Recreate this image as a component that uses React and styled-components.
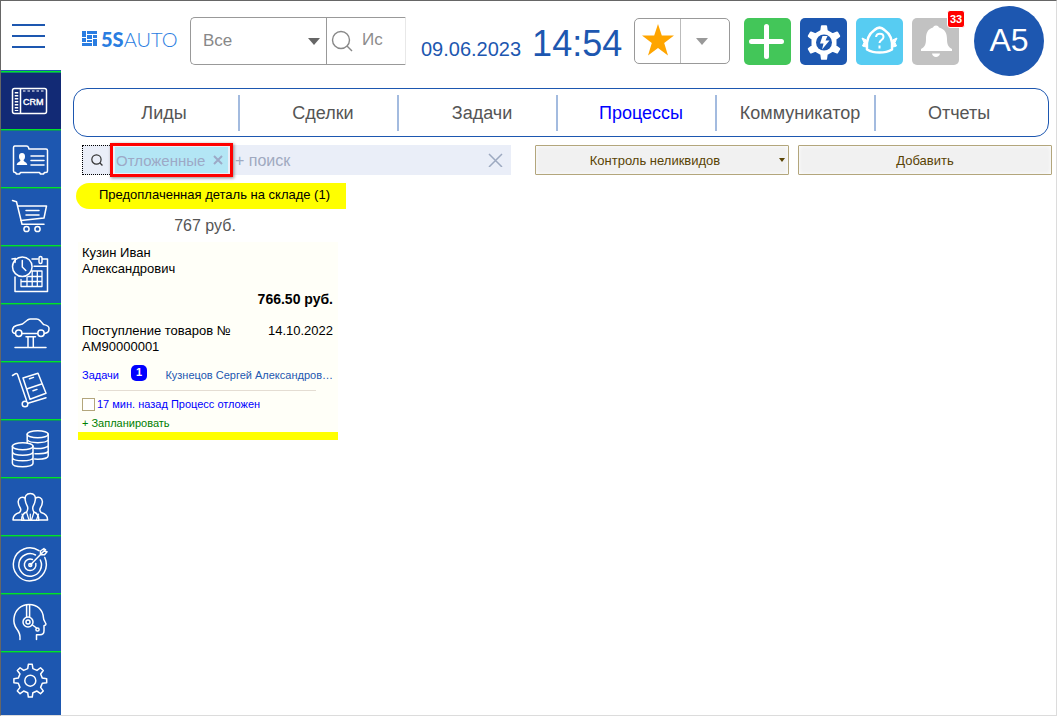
import React from "react";
import styled, { createGlobalStyle } from "styled-components";

const BLUE = "#1d57b0";

const GlobalStyle = createGlobalStyle`
  *, *::before, *::after { box-sizing: border-box; }
  body {
    margin: 0;
    background: #fff;
    color: #000;
    font-family: "Liberation Sans", Arial, sans-serif;
    font-size: 13px;
  }
  button, input, select { font-family: inherit; }
  button { cursor: pointer; }
`;

const Page = styled.div`
  display: grid;
  grid-template-columns: 60px minmax(0, 1fr);
  min-height: 100vh;
  border: 1px solid #dcdcdc;
  border-top-color: #666;
  border-left-color: #666;
`;

const Side = styled.aside`
  display: flex;
  flex-direction: column;
`;

const MenuButton = styled.button`
  height: 69px;
  padding: 0 0 0 11px;
  border: 0;
  background: none;
  text-align: left;
  svg { display: block; }
`;

const SideNav = styled.nav`
  flex: 1;
  padding-top: 1px;
  background: ${BLUE};
`;

const SideLink = styled.a`
  display: block;
  height: 58px;
  border-top: 1px solid #00e428;
  background: ${(p) => (p.$active ? "#122a75" : BLUE)};
  box-shadow: inset 0 1px #0d8f68;
  svg { display: block; }
`;

const Main = styled.main`
  display: flex;
  flex-direction: column;
`;

const Header = styled.header`
  display: flex;
  align-items: center;
  height: 80px;
  padding: 0 12px 0 21px;
`;

const Logo = styled.a`
  display: flex;
  align-items: center;
  gap: 4px;
  width: 108px;
  padding-bottom: 5px;
  color: #2a7de1;
  font-family: Lato, sans-serif;
  font-size: 20px;
  font-weight: 300;
  line-height: 24px;
  text-decoration: none;
  b { font-weight: 900; }
  svg { flex: none; }
`;

const SearchBar = styled.form`
  display: flex;
  width: 216px;
  height: 48px;
  border: 1px solid #999;
  border-right: 1px solid #e8e8e8;
  border-radius: 5px 0 0 5px;
`;

const SelectBox = styled.label`
  position: relative;
  display: block;
  width: 136px;
  border-right: 1px solid #999;
  svg { position: absolute; right: 6px; top: 20px; pointer-events: none; }
`;

const ScopeSelect = styled.select`
  appearance: none;
  width: 100%;
  height: 100%;
  padding: 0 24px 1px 12px;
  border: 0;
  background: none;
  color: #888;
  font-size: 17px;
`;

const QueryBox = styled.label`
  display: flex;
  align-items: center;
  gap: 9px;
  flex: 1;
  min-width: 0;
  padding-left: 4px;
  svg { flex: none; }
`;

const QueryInput = styled.input`
  width: 24px;
  padding: 0 0 2px;
  border: 0;
  background: none;
  font-size: 17px;
  outline: none;
  &::placeholder { color: #8c8c8c; opacity: 1; }
`;

const Clock = styled.time`
  display: flex;
  align-items: baseline;
  gap: 11px;
  margin-left: 15px;
  padding-top: 11px;
  color: ${BLUE};
  font-size: 20px;
  line-height: 40px;
  white-space: nowrap;
  strong { font-size: 36px; font-weight: 400; }
`;

const Actions = styled.div`
  display: flex;
  align-items: center;
  gap: 9px;
  margin-left: auto;
`;

const Favorites = styled.div`
  display: flex;
  width: 96px;
  height: 46px;
  margin-right: 5px;
  border: 1px solid #999;
  border-radius: 5px;
`;

const FavoriteButton = styled.button`
  display: grid;
  place-items: center;
  flex: 1;
  padding: 0 0 2px;
  border: 0;
  background: none;
  & + & { flex: none; width: 49px; padding: 0 6px 0 0; border-left: 1px solid #bbb; }
`;

const IconButton = styled.button`
  position: relative;
  width: 47px;
  height: 47px;
  padding: 0;
  border: 0;
  border-radius: 5px;
  background: ${(p) => p.$color};
  svg { display: block; }
`;

const Badge = styled.span`
  position: absolute;
  top: -8px;
  right: -6px;
  width: 18px;
  height: 18px;
  border: 1px solid #fff;
  border-radius: 3px;
  background: #f00;
  color: #fff;
  font-size: 11px;
  font-weight: 700;
  line-height: 16px;
  text-align: center;
`;

const Avatar = styled.button`
  width: 70px;
  height: 70px;
  margin-left: 6px;
  padding: 0 0 2px;
  border: 0;
  border-radius: 50%;
  background: ${BLUE};
  color: #fff;
  font-size: 32px;
`;

const Tabs = styled.nav`
  display: flex;
  align-items: center;
  height: 49px;
  margin: 7px 7px 0 12px;
  padding: 0 13px 0 7px;
  border: 1px solid ${BLUE};
  border-radius: 14px;
`;

const Tab = styled.a`
  flex: 1 1 0;
  height: 36px;
  padding-left: 9px;
  border-right: 2px solid #a3bbdf;
  color: ${(p) => (p.$active ? "#00f" : "#555")};
  font-size: 18px;
  line-height: 36px;
  text-align: center;
  text-decoration: none;
  &:last-child { border-right-color: transparent; }
`;

const Toolbar = styled.div`
  display: flex;
  gap: 24px;
  margin: 8px 4px 0 21px;
`;

const Filter = styled.form`
  display: flex;
  align-items: center;
  flex: 429 1 0;
  min-width: 0;
  height: 30px;
  background: #eaeef8;
`;

const FilterButton = styled.button`
  display: grid;
  place-items: center;
  width: 28px;
  height: 30px;
  padding: 0;
  border: 1px dotted #000;
  border-right: 0;
  background: none;
`;

const ChipFrame = styled.div`
  flex: none;
  height: 34px;
  padding: 1px 2px;
  border: 3px solid #f00;
  background: #eaeef8;
  box-shadow: 1px 1px 3px #888;
`;

const Chip = styled.span`
  display: flex;
  align-items: center;
  gap: 8px;
  width: 113px;
  height: 26px;
  padding-left: 1px;
  background: #b3e6f5;
  color: #9da9c6;
  font-size: 15px;
  white-space: nowrap;
`;

const PlainButton = styled.button`
  display: grid;
  place-items: center;
  flex: none;
  padding: 0;
  border: 0;
  background: none;
`;

const FilterInput = styled.input`
  flex: 1;
  min-width: 0;
  padding: 2px 0 0 2px;
  border: 0;
  background: none;
  font-size: 16px;
  outline: none;
  &::placeholder { color: #a0a9c0; opacity: 1; }
`;

const ToolButtons = styled.div`
  display: grid;
  grid-template-columns: repeat(2, minmax(0, 1fr));
  gap: 9px;
  flex: 517 1 0;
`;

const ToolButton = styled.button`
  position: relative;
  height: 30px;
  padding: 0 ${(p) => (p.$menu ? 14 : 0)}px 0 0;
  border: 1px solid #b3a67c;
  border-radius: 1px;
  background: #f1f1f1;
  box-shadow: inset 0 0 4px #fff;
  color: #594304;
  font-size: 13px;
  svg { position: absolute; right: 3px; top: 12px; }
`;

const Column = styled.section`
  width: 270px;
  margin: 8px 0 0 15px;
`;

const ColumnTitle = styled.h2`
  height: 26px;
  margin: 0;
  padding-left: 7px;
  border-radius: 13px 0 0 13px;
  background: #ff0;
  font-size: 13px;
  font-weight: 400;
  line-height: 24px;
  text-align: center;
  white-space: nowrap;
`;

const ColumnTotal = styled.p`
  margin: 0;
  padding: 1px 12px 0 0;
  color: #555;
  font-size: 16px;
  line-height: 32px;
  text-align: center;
`;

const Card = styled.article`
  width: 260px;
  margin-left: 2px;
  padding: 3px 5px 0 4px;
  border-bottom: 8px solid #ff0;
  background: #fffff8;
  line-height: 16px;
`;

const Customer = styled.p`
  width: 120px;
  margin: 0;
`;

const Amount = styled.p`
  margin: 14px 0 16px;
  font-size: 14px;
  font-weight: 700;
  text-align: right;
`;

const CardRow = styled.div`
  display: flex;
  justify-content: space-between;
  font-size: 13px;
`;

const DocName = styled.span`
  width: 160px;
`;

const MetaRow = styled.div`
  display: flex;
  align-items: center;
  justify-content: space-between;
  margin-top: 12px;
  padding-bottom: 7px;
`;

const TaskGroup = styled.div`
  display: flex;
  gap: 12px;
`;

const CardLink = styled.a`
  flex: none;
  color: ${(p) => p.$color};
  font-size: 11px;
  line-height: 16px;
  text-decoration: none;
  white-space: nowrap;
`;

const Count = styled.span`
  width: 16px;
  height: 16px;
  margin-top: -2px;
  margin-bottom: 2px;
  border-radius: 5px;
  background: #00f;
  color: #fff;
  font-size: 11px;
  font-weight: 700;
  line-height: 15px;
  text-align: center;
`;

const Divider = styled.hr`
  height: 1px;
  margin: 0 17px 0 16px;
  border: 0;
  background: #e4ddd3;
`;

const Check = styled.label`
  display: flex;
  align-items: center;
  gap: 2px;
  margin-top: 5px;
  color: #00f;
  font-size: 11px;
  input {
    appearance: none;
    width: 13px;
    height: 13px;
    margin: 0;
    border: 1px solid #b3a67c;
    background: #fff;
  }
`;

const PlanRow = styled.div`
  display: flex;
  margin-top: 3px;
  padding-bottom: 1px;
`;

function gearPath(cx, cy, teeth, outer, inner, rootHalf, tipHalf) {
  const pts = [];
  const step = (Math.PI * 2) / teeth;
  for (let i = 0; i < teeth; i += 1) {
    const a = i * step - Math.PI / 2;
    [[inner, -rootHalf], [outer, -tipHalf], [outer, tipHalf], [inner, rootHalf]].forEach(([r, f]) => {
      pts.push(`${(cx + r * Math.cos(a + f * step)).toFixed(2)} ${(cy + r * Math.sin(a + f * step)).toFixed(2)}`);
    });
  }
  return `M${pts.join("L")}Z`;
}

const SideIcon = ({ children }) => (
  <svg width="60" height="57" viewBox="0 0 60 57" fill="none" stroke="#fff" strokeWidth="1.5" strokeLinejoin="round" strokeLinecap="round" aria-hidden="true">
    {children}
  </svg>
);

const sections = [
  ["CRM", (
    <>
      <rect x="11.5" y="16.5" width="34" height="25" rx="2" />
      <path d="M19.5 17v24" />
      <path d="M22 19h22" strokeDasharray="2.5 2" strokeLinecap="butt" strokeWidth="1.2" />
      <path d="M15.5 20v19" strokeDasharray="1.4 1.6" strokeLinecap="butt" strokeWidth="3.5" />
      <text x="22" y="33" fill="#fff" strokeWidth="0.4" fontSize="9">CRM</text>
    </>
  )],
  ["Клиенты", (
    <>
      <path d="M13.500 16h12q1.500 0 2 1.500l.5 1.500h17q1.500 0 1.500 1.500v20.500q0 1.500-1.500 1.500h-1.500l-1 1.500h-3l-1-1.500h-19l-1 1.500h-3l-1-1.500h-.5q-1.500 0-1.500-1.500v-23.500q0-1.500 1.500-1.500z" />
      <path d="M21 23c2.200 0 3 1.500 3 3.400 0 1.600-.6 2.900-1.500 3.500.2 2.400 3.500 1.700 3.800 5.100H15.700c.3-3.400 3.600-2.700 3.800-5.100-.9-.6-1.500-1.900-1.500-3.500C18 24.500 18.800 23 21 23z" fill="#fff" stroke="none" />
      <path d="M30 26h13M30 30.500h13M30 35h13" />
    </>
  )],
  ["Продажи", (
    <>
      <path d="M11.500 12.500l4 1.200 5.500 22.500h22" />
      <path d="M17 18h28.500l-2.500 12-23 2.500" />
      <path d="M25 22.500h13M25 27h13" />
      <circle cx="25.500" cy="41" r="2.600" />
      <circle cx="36.500" cy="41" r="2.600" />
    </>
  )],
  ["Календарь", (
    <>
      <circle cx="21.300" cy="20.700" r="9.800" />
      <path d="M21.300 14.500v6.500l3.500 3.500M11 13l3.500-.5-.5 4" />
      <path d="M14 31v14.500h32.500v-32.500h-5M37 13h-6M33 20.300h13.500" />
      <rect x="38" y="10.500" width="3" height="7" rx="1.500" />
      <path d="M31.500 25h9.500v15.500h-21v-7M20 35.500h21M26 31v9.500M31.200 25v15.500M36.300 25v15.500M27 30.500h14" strokeWidth="1.300" />
    </>
  )],
  ["Автосервис", (
    <>
      <path d="M14.500 29.500c-3-.5-3.500-2-3-4 .5-2.500 2-3.500 4-4l6-1.500 5-4c1-.6 2-.9 3-.9h6c1.500 0 2.500.5 3.500 1.500l3.500 3.900c3 .8 5.500 1.300 5.500 3.800 0 3-.5 4.500-4.500 5.200M21 29.500h15.500" />
      <circle cx="17.700" cy="29.300" r="3.200" />
      <circle cx="40" cy="29.300" r="3.200" />
      <path d="M25 32.800h9.500M27 33v10M32.300 33v10M14 43.500h31" />
    </>
  )],
  ["Склад", (
    <>
      <path d="M11.500 13.500l3-1.800q1.500-.7 2.200 1L25.500 38.500M27 41.300l18-5.500" />
      <circle cx="24" cy="42" r="2.800" />
      <path d="M22 16l15-4.700 8 20-16 6zM26.300 26.700l15-5M28.500 16.700l4-1.300M32 28.800l4-1.400" />
    </>
  )],
  ["Финансы", (
    <>
      <ellipse cx="36.700" cy="14.300" rx="10.500" ry="3.500" />
      <path d="M26.200 14.300v9M47.200 14.300v21.500c0 2-4.500 3.500-10.500 3.500l-3-.2M26.500 20c2 3.500 18.500 3.500 20.500 0M33 28.300c7 .6 14-.5 14.200-3M34 33.700c7 .5 13-.5 13.200-3" />
      <ellipse cx="21.700" cy="26.300" rx="10.300" ry="3.500" />
      <path d="M11.400 26.300v17c0 4.600 20.600 4.600 20.600 0v-17M11.400 32c1 4.300 19.600 4.300 20.600 0M11.400 37.600c1 4.300 19.600 4.300 20.600 0" />
    </>
  )],
  ["Сотрудники", (
    <>
      <path d="M29.300 15.500c4 0 5.500 3 5 6.500-.3 3-1.500 5-2.300 6.500-.6 2 0 4 .8 5.500 4 1 5 3.500 5 8.200H20.700c0-4.700 1-7.200 5-8.200.8-1.500 1.400-3.500.8-5.500-.8-1.500-2-3.500-2.300-6.500-.5-3.500 1-6.500 5.100-6.500z" />
      <path d="M24 20c-3-1.800-6.500-.5-6.800 3.500-.2 3 1 5 2.300 7 .8 2 0 3-1 4-4 1-6.500 3-6.500 7.500h8.500M34.600 20c3-1.800 6.500-.5 6.800 3.500.2 3-1 5-2.300 7-.8 2 0 3 1 4 4 1 6.500 3 6.500 7.500h-8.500" />
      <path d="M25.500 34l2.500 8M33 34l-2.500 8M29.300 36v6M21 36l2 6M37.500 36l-2 6" strokeWidth="1.200" />
    </>
  )],
  ["Цели", (
    <>
      <path d="M38 14.700A16.500 16.500 0 1 0 43.800 21.500M34.500 19A11.300 11.300 0 1 0 39.300 24M31.500 23.500A5.800 5.800 0 1 0 34.800 27.500M29.300 29L41 17M39.500 18.500v-3.500l3.500-2.500.5 2.500 2.500.8-2.500 3zM41 17l3.500-3.500" />
      <circle cx="29.300" cy="29" r="1.500" />
    </>
  )],
  ["Поддержка", (
    <>
      <path d="M19 45.500c.5-5-.7-7.500-3.500-11C13 31 12.500 28 13 24c1-8 7-13.500 15-13.500 8.500 0 14 5.500 14.500 13.500 0 1 .3 2 1 3l1.500 3c0 1-.8 1.300-2 1.700v5c0 3-1.500 4-4 4h-3.500v4.800" />
      <path d="M25.600 11v12M28.600 11v12M31.500 31l4 3" />
      <circle cx="27" cy="28" r="5" />
      <circle cx="27" cy="28" r="2" />
      <circle cx="36.500" cy="35.500" r="1.600" />
    </>
  )],
  ["Настройки", (
    <>
      <path d={gearPath(29.3, 28.700, 8, 16.5, 12.3, 0.27, 0.15)} />
      <circle cx="29.300" cy="28.700" r="5.500" />
    </>
  )],
];

const tabs = ["Лиды", "Сделки", "Задачи", "Процессы", "Коммуникатор", "Отчеты"];

const Caret = ({ width, height, color }) => (
  <svg width={width} height={height} viewBox="0 0 10 6" preserveAspectRatio="none" aria-hidden="true">
    <path d="M0 0h10L5 6z" fill={color} />
  </svg>
);

const Lens = ({ size, color, width }) => (
  <svg width={size} height={size} viewBox="0 0 22 22" fill="none" stroke={color} strokeWidth={width} aria-hidden="true">
    <circle cx="10" cy="10" r="8.500" />
    <path d="M16 16l5 5" />
  </svg>
);

const Cross = ({ size, width, color }) => (
  <svg width={size} height={size} viewBox={`0 0 ${size} ${size}`} stroke={color} strokeWidth={width} aria-hidden="true">
    <path d={`M1 1L${size - 1} ${size - 1}M${size - 1} 1L1 ${size - 1}`} />
  </svg>
);

export default function App() {
  return (
    <>
      <GlobalStyle />
      <Page>
        <Side>
          <MenuButton type="button" aria-label="Меню">
            <svg width="34" height="24" stroke={BLUE} strokeWidth="2" aria-hidden="true">
              <path d="M0 1h33M0 12h33M0 23h33" />
            </svg>
          </MenuButton>
          <SideNav>
            {sections.map(([name, icon], i) => (
              <SideLink key={name} href="#" aria-label={name} $active={i === 0}>
                <SideIcon>{icon}</SideIcon>
              </SideLink>
            ))}
          </SideNav>
        </Side>
        <Main>
          <Header>
            <Logo href="#">
              <svg width="15" height="15" viewBox="0 0 15 15" fill="#2a7de1" aria-hidden="true">
                <path d="M0 0h4v6H0zM5 0h10v3H5zM5 4h5v4H5zM11 4h4v3h-4zM0 7h4v4H0zM5 9h5v2H5zM11 8h4v7h-4zM0 12h10v3H0z" />
              </svg>
              <span><b>5S</b>AUTO</span>
            </Logo>
            <SearchBar>
              <SelectBox>
                <ScopeSelect aria-label="Раздел поиска" defaultValue="Все">
                  <option>Все</option>
                </ScopeSelect>
                <Caret width="12" height="7" color="#666" />
              </SelectBox>
              <QueryBox>
                <Lens size={22} color="#888" width="1.400" />
                <QueryInput aria-label="Поиск" placeholder="Ис" />
              </QueryBox>
            </SearchBar>
            <Clock>
              <span>09.06.2023</span>
              <strong>14:54</strong>
            </Clock>
            <Actions>
              <Favorites>
                <FavoriteButton type="button" aria-label="Избранное">
                  <svg width="32" height="32" viewBox="0 0 32 32" aria-hidden="true">
                    <path d="M16 0l3.800 11.600H32l-9.800 7.400 3.800 12.500-10-7.500-10 7.500L9.800 19 0 11.600h12.200z" fill="#ffa500" />
                  </svg>
                </FavoriteButton>
                <FavoriteButton type="button" aria-label="Список избранного">
                  <Caret width="12" height="7" color="#999" />
                </FavoriteButton>
              </Favorites>
              <IconButton type="button" aria-label="Создать" $color="#43c659">
                <svg width="47" height="47" stroke="#fff" strokeWidth="5" strokeLinecap="round" aria-hidden="true">
                  <path d="M7.500 23.500h30M22.500 8.500v30" />
                </svg>
              </IconButton>
              <IconButton type="button" aria-label="Быстрые настройки" $color={BLUE}>
                <svg width="47" height="47" aria-hidden="true">
                  <path d={gearPath(24, 24.500, 6, 16.5, 12, 0.22, 0.12)} fill="#fff" stroke="#fff" strokeWidth="2" strokeLinejoin="round" />
                  <circle cx="24" cy="24.500" r="8" fill={BLUE} />
                  <path d="M22.500 18h5l-2 4.500h4l-7.500 9 1.500-6h-3.500z" fill="#fff" />
                </svg>
              </IconButton>
              <IconButton type="button" aria-label="Помощь" $color="#57ccf2">
                <svg width="47" height="47" fill="none" stroke="#fff" strokeWidth="2.500" strokeLinejoin="round" aria-hidden="true">
                  <path d="M11 31.500c-1-8 1.500-15.500 7.500-19.500 3.500-3.300 6.500-3.300 10 0 6 4 8.500 11.500 7.500 19.500-7 4-18 4-25 0z" />
                  <path d="M6 20l4.500 2-1 7-3-1 1.500-3.500zM41 20l-4.500 2 1 7 3-1-1.500-3.500z" fill="#fff" strokeWidth="1" />
                  <path d="M20 19c.5-4.500 7.500-4.500 7.500 0 0 3-4 3-4 6M23.500 27.500v3" strokeWidth="2" />
                </svg>
              </IconButton>
              <IconButton type="button" aria-label="Уведомления" $color="#c2c2c2">
                <svg width="47" height="47" fill="#fff" aria-hidden="true">
                  <path d="M24 7.500c1.500 0 2.500.8 3 2 6 1.500 8 6 8 11.500 0 6 1.500 8 5 10v2H9v-2c3.500-2 5-4 5-10 0-5.500 1.500-10 7-11.500.5-1.200 1.500-2 3-2zM20 35.500h8c-.5 4.500-7.500 4.500-8 0z" />
                </svg>
                <Badge>33</Badge>
              </IconButton>
              <Avatar type="button">A5</Avatar>
            </Actions>
          </Header>
          <Tabs>
            {tabs.map((name) => (
              <Tab key={name} href="#" $active={name === "Процессы"}>{name}</Tab>
            ))}
          </Tabs>
          <Toolbar>
            <Filter>
              <FilterButton type="button" aria-label="Найти">
                <Lens size={12} color="#333" width="2.200" />
              </FilterButton>
              <ChipFrame>
                <Chip>
                  Отложенные
                  <PlainButton type="button" aria-label="Убрать фильтр">
                    <Cross size={10} width="2" color="#9da9c6" />
                  </PlainButton>
                </Chip>
              </ChipFrame>
              <FilterInput aria-label="Добавить условие поиска" placeholder="+ поиск" />
              <PlainButton type="button" aria-label="Очистить">
                <svg width="30" height="14" stroke="#9da9c0" strokeWidth="1.500" aria-hidden="true">
                  <path d="M8 1l13 13M21 1L8 14" />
                </svg>
              </PlainButton>
            </Filter>
            <ToolButtons>
              <ToolButton type="button" aria-haspopup="menu" $menu>
                Контроль неликвидов
                <Caret width="6" height="4" color="#594304" />
              </ToolButton>
              <ToolButton type="button">Добавить</ToolButton>
            </ToolButtons>
          </Toolbar>
          <Column>
            <ColumnTitle>Предоплаченная деталь на складе (1)</ColumnTitle>
            <ColumnTotal>767 руб.</ColumnTotal>
            <Card>
              <Customer>Кузин Иван Александрович</Customer>
              <Amount>766.50 руб.</Amount>
              <CardRow>
                <DocName>Поступление товаров № АМ90000001</DocName>
                <span>14.10.2022</span>
              </CardRow>
              <MetaRow>
                <TaskGroup>
                  <CardLink href="#" $color="#00f">Задачи</CardLink>
                  <Count>1</Count>
                </TaskGroup>
                <CardLink href="#" $color={BLUE}>Кузнецов Сергей Александров…</CardLink>
              </MetaRow>
              <Divider />
              <Check>
                <input type="checkbox" />
                17 мин. назад Процесс отложен
              </Check>
              <PlanRow>
                <CardLink href="#" $color="#008000">+ Запланировать</CardLink>
              </PlanRow>
            </Card>
          </Column>
        </Main>
      </Page>
    </>
  );
}
